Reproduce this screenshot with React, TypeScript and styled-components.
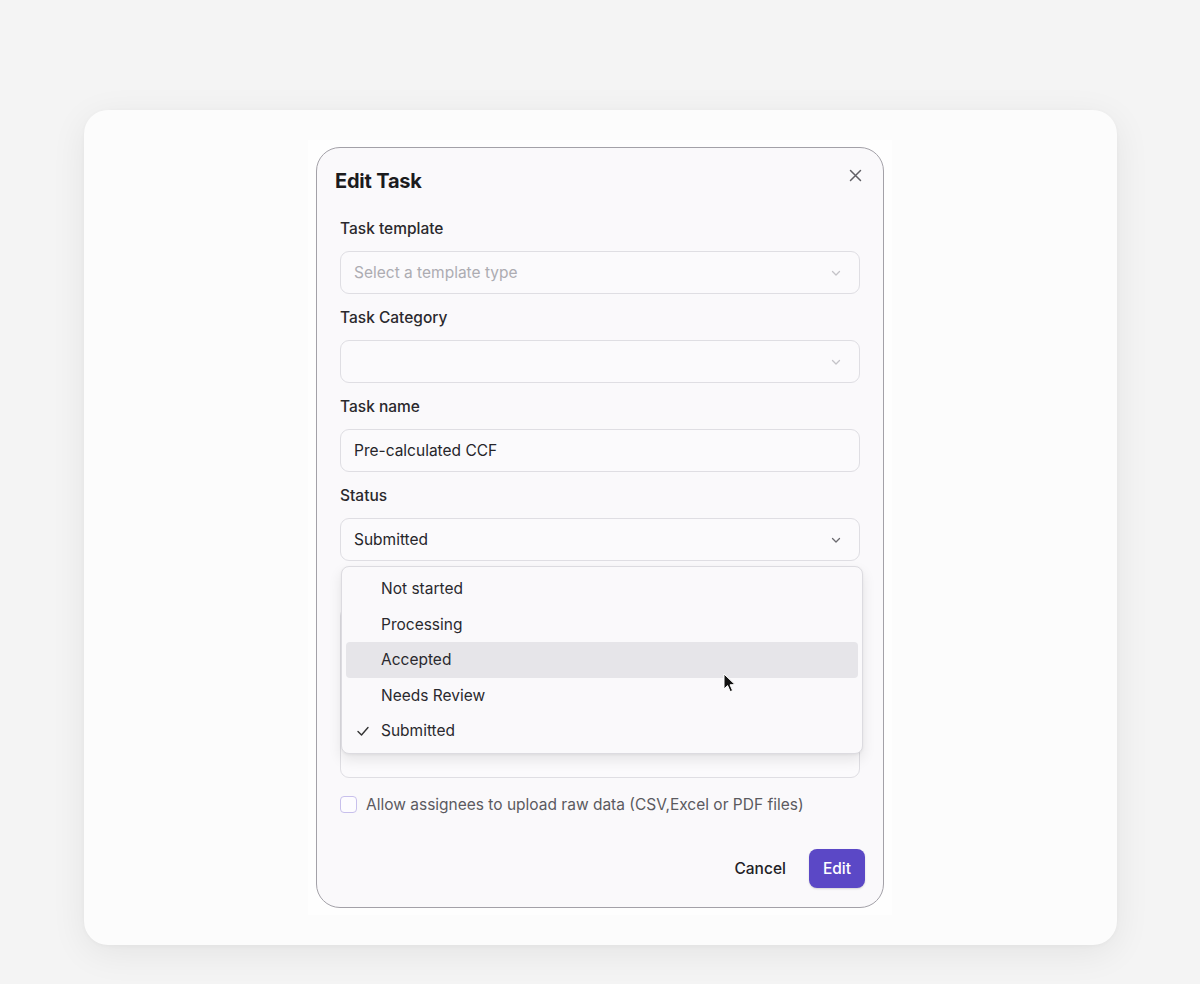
import React from "react";
import styled, { createGlobalStyle } from "styled-components";

const GlobalStyle = createGlobalStyle`
  html, body { margin: 0; padding: 0; }
  body {
    background: #f4f4f4;
    font-family: Inter, "Noto Sans", sans-serif;
    -webkit-font-smoothing: antialiased;
  }
  * { box-sizing: border-box; }
`;

const Page = styled.div`
  width: 1200px;
  height: 984px;
  padding: 110px 0 0 84px;
`;

const Card = styled.div`
  width: 1033px;
  height: 835px;
  background: #fcfcfc;
  border-radius: 24px;
  box-shadow: 0 8px 36px rgba(0, 0, 0, 0.07), 0 1px 4px rgba(0, 0, 0, 0.03);
  display: flex;
  justify-content: center;
  padding: 30px 1px 0 0;
`;

const Frame = styled.div`
  width: 584px;
  height: 775px;
  background: #fefefe;
  padding: 7px 8px;
`;

const Dialog = styled.div`
  position: relative;
  width: 568px;
  height: 761px;
  background: #faf9fb;
  border: 1px solid #a3a1a8;
  border-radius: 24px;
  padding: 21px 18px 19px 18px;
  display: flex;
  flex-direction: column;
`;

const Title = styled.h2`
  margin: 0;
  font-size: 20px;
  line-height: 24px;
  font-weight: 700;
  color: #1b1b1d;
  letter-spacing: -0.2px;
`;

const CloseButton = styled.button`
  position: absolute;
  top: 19px;
  right: 20px;
  width: 16px;
  height: 16px;
  padding: 0;
  border: none;
  background: none;
  display: flex;
  align-items: center;
  justify-content: center;
  color: #616066;
`;

const Form = styled.div`
  display: flex;
  flex-direction: column;
  padding: 0 5px;
  margin-top: 26px;
`;

const Field = styled.div`
  position: relative;
  display: flex;
  flex-direction: column;
  gap: 12px;
  margin-bottom: 14px;
`;

const Label = styled.label`
  font-size: 15.5px;
  line-height: 20px;
  font-weight: 500;
  color: #2a292d;
  min-height: 20px;
`;

const Box = styled.div<{ $tall?: boolean }>`
  height: ${(p) => (p.$tall ? "171px" : "43px")};
  border: 1px solid #dfdee3;
  border-radius: 9px;
  background: #fbfafc;
  display: flex;
  align-items: center;
  justify-content: space-between;
  padding: 0 17px 0 13px;
  font-size: 15.5px;
  color: #26252a;
`;

const Placeholder = styled.span`
  color: #adacb2;
`;

const Chevron = styled.svg<{ $muted?: boolean }>`
  width: 12px;
  height: 12px;
  color: ${(p) => (p.$muted ? "#c4c3c8" : "#6b6a70")};
`;

const Menu = styled.div`
  position: absolute;
  top: 80px;
  left: 1px;
  width: 522px;
  padding: 4px;
  background: #faf9fb;
  border: 1px solid #dcdbe0;
  border-radius: 8px;
  box-shadow: 0 6px 14px rgba(0, 0, 0, 0.09), 0 1px 3px rgba(0, 0, 0, 0.05);
  z-index: 5;
`;

const Item = styled.div<{ $active?: boolean }>`
  position: relative;
  height: 35.5px;
  display: flex;
  align-items: center;
  padding-left: 35px;
  border-radius: 4px;
  font-size: 15.5px;
  color: #2a292e;
  background: ${(p) => (p.$active ? "#e6e5e9" : "transparent")};
`;

const CheckMark = styled.svg`
  position: absolute;
  left: 10px;
  top: 50%;
  margin-top: -7px;
  width: 14px;
  height: 14px;
  color: #333;
`;

const CheckRow = styled.div`
  display: flex;
  align-items: center;
  gap: 9px;
  margin-top: 3px;
`;

const CheckBox = styled.span`
  width: 17px;
  height: 17px;
  border: 1.5px solid #c8c0ec;
  border-radius: 4px;
  background: #fdfcff;
`;

const CheckLabel = styled.span`
  font-size: 15.5px;
  color: #5b5a60;
`;

const Footer = styled.div`
  margin-top: auto;
  display: flex;
  justify-content: flex-end;
  align-items: center;
  gap: 11px;
`;

const Button = styled.button<{ $primary?: boolean }>`
  height: 39px;
  border: none;
  border-radius: 8px;
  font-family: Inter, "Noto Sans", sans-serif;
  font-size: 15.5px;
  font-weight: 500;
  padding: 0 ${(p) => (p.$primary ? "14px" : "12px")};
  color: ${(p) => (p.$primary ? "#ffffff" : "#222126")};
  background: ${(p) => (p.$primary ? "#5b48c6" : "transparent")};
  box-shadow: ${(p) => (p.$primary ? "0 1px 2px rgba(0,0,0,0.15)" : "none")};
`;

const Cursor = styled.svg`
  position: absolute;
  left: 406px;
  top: 525px;
  width: 13px;
  height: 20px;
  z-index: 10;
`;

const ChevronIcon = ({ muted }: { muted?: boolean }) => (
  <Chevron $muted={muted} viewBox="0 0 12 12" fill="none">
    <path d="M2.5 4.5 L6 8 L9.5 4.5" stroke="currentColor" strokeWidth="1.3" strokeLinecap="round" strokeLinejoin="round" />
  </Chevron>
);

const options = ["Not started", "Processing", "Accepted", "Needs Review", "Submitted"];

export default function App() {
  return (
    <>
      <GlobalStyle />
      <Page>
        <Card>
          <Frame>
            <Dialog>
              <Title>Edit Task</Title>
              <CloseButton aria-label="Close">
                <svg width="13" height="13" viewBox="0 0 13 13" fill="none">
                  <path d="M1.5 1.5 L11.5 11.5 M11.5 1.5 L1.5 11.5" stroke="currentColor" strokeWidth="1.5" strokeLinecap="round" />
                </svg>
              </CloseButton>
              <Form>
                <Field>
                  <Label>Task template</Label>
                  <Box>
                    <Placeholder>Select a template type</Placeholder>
                    <ChevronIcon muted />
                  </Box>
                </Field>
                <Field>
                  <Label>Task Category</Label>
                  <Box>
                    <span />
                    <ChevronIcon muted />
                  </Box>
                </Field>
                <Field>
                  <Label>Task name</Label>
                  <Box>Pre-calculated CCF</Box>
                </Field>
                <Field>
                  <Label>Status</Label>
                  <Box>
                    <span>Submitted</span>
                    <ChevronIcon />
                  </Box>
                  <Menu>
                    {options.map((o) => (
                      <Item key={o} $active={o === "Accepted"}>
                        {o === "Submitted" && (
                          <CheckMark viewBox="0 0 14 14" fill="none">
                            <path d="M2 7.5 L5.5 11 L12 3.5" stroke="currentColor" strokeWidth="1.4" strokeLinecap="round" strokeLinejoin="round" />
                          </CheckMark>
                        )}
                        {o}
                      </Item>
                    ))}
                  </Menu>
                </Field>
                <Field>
                  <Label aria-hidden="true" />
                  <Box $tall />
                </Field>
                <CheckRow>
                  <CheckBox />
                  <CheckLabel>Allow assignees to upload raw data (CSV,Excel or PDF files)</CheckLabel>
                </CheckRow>
              </Form>
              <Footer>
                <Button>Cancel</Button>
                <Button $primary>Edit</Button>
              </Footer>
              <Cursor viewBox="0 0 13 20">
                <path d="M1 1 L1 16 L4.6 12.6 L7.2 18.6 L9.6 17.6 L7 11.8 L12 11.6 Z" fill="#111" stroke="#fff" strokeWidth="1" strokeLinejoin="round" />
              </Cursor>
            </Dialog>
          </Frame>
        </Card>
      </Page>
    </>
  );
}
